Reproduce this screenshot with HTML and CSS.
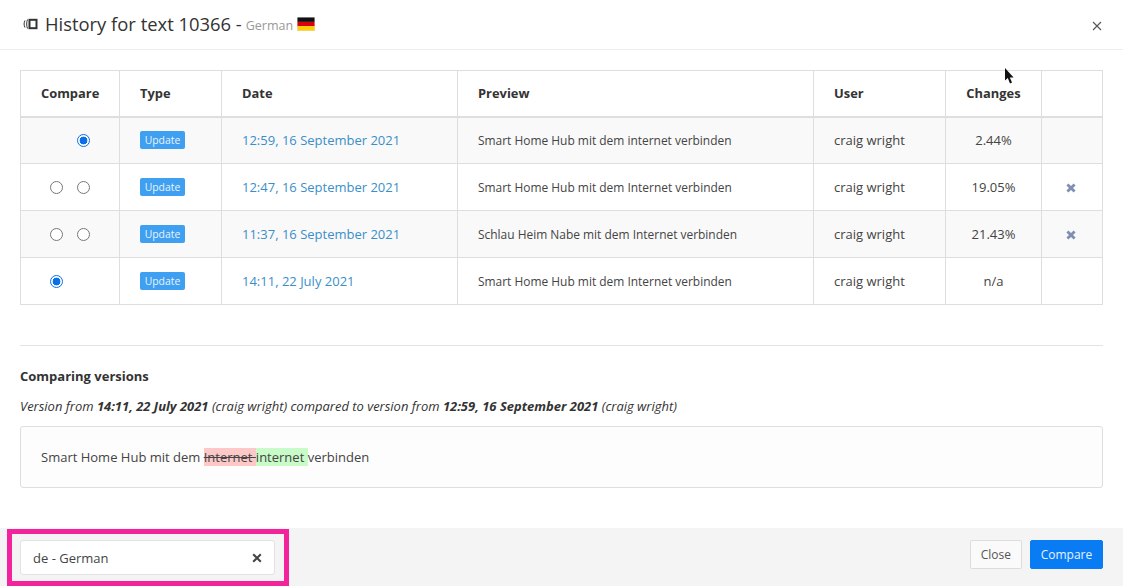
FILE: index.html
```html
<!DOCTYPE html>
<html lang="en">
<head>
<meta charset="utf-8">
<title>History for text 10366</title>
<link rel="stylesheet" href="styles.css">
</head>
<body>
<div class="modal">
  <header class="head">
    <svg class="head-icon" width="16" height="12" viewBox="0 0 16 12" fill="none" stroke="#333"><path d="M3 2.5C1.8 4.5 1.8 7.5 3 9.5" stroke-width="1"/><path d="M5.5 1.5C4.4 4.2 4.4 7.8 5.5 10.5" stroke-width="1"/><rect x="7.5" y="1.8" width="7" height="8.4" stroke-width="2"/></svg>
    <h1 class="title">History for text 10366 -</h1>
    <span class="lang">German</span>
    <svg class="flag" width="18" height="14" viewBox="0 0 18 14"><rect width="18" height="14" fill="#ddd"/><rect x="0.5" y="0.5" width="17" height="4.4" fill="#111"/><rect x="0.5" y="4.9" width="17" height="4.3" fill="#d8000c"/><rect x="0.5" y="9.2" width="17" height="4.3" fill="#ffce00"/></svg>
    <svg class="close-x" width="10" height="10" viewBox="0 0 10 10" stroke="#555" stroke-width="1.1"><path d="M1 1L9 9M9 1L1 9"/></svg>
  </header>
  <svg class="cursor" width="11" height="17" viewBox="0 0 11 17"><path d="M1 0V12.5L3.8 10L6 15.5L8 14.6L5.8 9.5H9.6Z" fill="#111"/></svg>
  <main class="body">
    <table class="history">
      <thead>
        <tr>
          <th class="c-compare">Compare</th>
          <th class="c-type">Type</th>
          <th class="c-date">Date</th>
          <th class="c-preview">Preview</th>
          <th class="c-user">User</th>
          <th class="c-changes">Changes</th>
          <th class="c-action"></th>
        </tr>
      </thead>
      <tbody>
        <tr>
          <td class="radios"><span class="radio hidden"></span><span class="radio on"></span></td>
          <td><span class="badge">Update</span></td>
          <td><a class="link" href="#">12:59, 16 September 2021</a></td>
          <td class="preview">Smart Home Hub mit dem internet verbinden</td>
          <td>craig wright</td>
          <td class="center">2.44%</td>
          <td></td>
        </tr>
        <tr>
          <td class="radios"><span class="radio"></span><span class="radio"></span></td>
          <td><span class="badge">Update</span></td>
          <td><a class="link" href="#">12:47, 16 September 2021</a></td>
          <td class="preview">Smart Home Hub mit dem Internet verbinden</td>
          <td>craig wright</td>
          <td class="center">19.05%</td>
          <td class="center"><svg class="del" width="10" height="10" viewBox="0 0 10 10" stroke="#7f8fb3" stroke-width="2.8"><path d="M1.4 1.4L8.6 8.6M8.6 1.4L1.4 8.6"/></svg></td>
        </tr>
        <tr>
          <td class="radios"><span class="radio"></span><span class="radio"></span></td>
          <td><span class="badge">Update</span></td>
          <td><a class="link" href="#">11:37, 16 September 2021</a></td>
          <td class="preview">Schlau Heim Nabe mit dem Internet verbinden</td>
          <td>craig wright</td>
          <td class="center">21.43%</td>
          <td class="center"><svg class="del" width="10" height="10" viewBox="0 0 10 10" stroke="#7f8fb3" stroke-width="2.8"><path d="M1.4 1.4L8.6 8.6M8.6 1.4L1.4 8.6"/></svg></td>
        </tr>
        <tr>
          <td class="radios"><span class="radio on"></span><span class="radio hidden"></span></td>
          <td><span class="badge">Update</span></td>
          <td><a class="link" href="#">14:11, 22 July 2021</a></td>
          <td class="preview">Smart Home Hub mit dem Internet verbinden</td>
          <td>craig wright</td>
          <td class="center">n/a</td>
          <td></td>
        </tr>
      </tbody>
    </table>
    <hr class="rule">
    <h2 class="sub">Comparing versions</h2>
    <p class="versions">Version from <b>14:11, 22 July 2021</b> (craig wright) compared to version from <b>12:59, 16 September 2021</b> (craig wright)</p>
    <div class="diff">Smart Home Hub mit dem <del>Internet </del><ins>internet </ins>verbinden</div>
  </main>
  <footer class="foot">
    <div class="highlight">
      <div class="select"><span>de - German</span><svg width="10" height="10" viewBox="0 0 10 10" stroke="#444" stroke-width="2"><path d="M1.2 1.2L8.8 8.8M8.8 1.2L1.2 8.8"/></svg></div>
    </div>
    <div class="actions">
      <button class="btn">Close</button>
      <button class="btn primary">Compare</button>
    </div>
  </footer>
</div>
</body>
</html>
```

FILE: styles.css
```css
* { box-sizing: border-box; }
html, body { margin: 0; height: 100%; background: #fff; }
body { font-family: "Open Sans", sans-serif; font-size: 14px; color: #444; overflow: hidden; }
.modal { position: relative; width: 1123px; height: 587px; display: flex; flex-direction: column; }
.head { height: 50px; padding: 0 21px 1px 22px; display: flex; align-items: center; border-bottom: 1px solid #eeeeee; }
.head-icon { margin-right: 7px; }
.title { margin: -1px 4px 0 0; font-size: 18.4px; font-weight: 400; color: #333; line-height: 24px; }
.lang { font-size: 12.5px; color: #999; margin-top: 2px; margin-right: 4px; }
.close-x { margin-left: auto; margin-top: 4px; }
.cursor { position: absolute; left: 1004px; top: 68px; }
.body { flex: 1; padding: 20px 20px 0; }
.history { width: 1083px; table-layout: fixed; border-collapse: collapse; }
.history th, .history td { border: 1px solid #dedede; padding: 0 20px; text-align: left; }
.history th { height: 46px; font-size: 12.9px; font-weight: 700; color: #333; border-bottom-width: 2px; }
.history td { height: 47px; font-size: 13px; color: #444; }
.history tbody tr:nth-child(odd) { background: #f9f9f9; }
.c-compare { width: 99px; }
.c-type { width: 102px; }
.c-date { width: 236px; }
.c-preview { width: 356px; }
.c-user { width: 132px; }
.c-changes { width: 96px; }
.history .c-changes { text-align: center; padding: 0; }
.history .center { text-align: center; padding: 0; }
.history .preview { font-size: 11.95px; }
.radios { white-space: nowrap; }
.history .radios { padding: 0 0 2px 29px; }
.radio { display: inline-block; width: 13px; height: 13px; border-radius: 50%; border: 1px solid #777; background: #fff; vertical-align: middle; margin-right: 14px; }
.radio.hidden { visibility: hidden; }
.radio.on { border: 1.5px solid #0a6fe8; background: radial-gradient(circle, #0a6fe8 0, #0a6fe8 3.6px, #fff 4.2px); }
.badge { display: inline-block; width: 45px; text-align: center; height: 18px; line-height: 18px; background: #3f9ff0; color: #e9f4fe; font-size: 10.4px; border-radius: 2px; vertical-align: middle; position: relative; top: -1px; }
.link { color: #3a8fc9; text-decoration: none; }
.del { vertical-align: middle; position: relative; left: -1px; top: -1px; }
.rule { margin: 40px 0 0; border: 0; border-top: 1px solid #e3e3e3; }
.sub { margin: 21px 0 0; font-size: 13px; line-height: 19px; font-weight: 700; color: #333; }
.versions { margin: 11px 0 0; font-size: 12.97px; line-height: 19px; font-style: italic; color: #333; }
.diff { margin-top: 10px; height: 62px; padding: 0 20px; display: flex; align-items: center; white-space: pre; background: #fdfdfd; border: 1px solid #dedede; border-radius: 3px; font-size: 13px; color: #444; }
del { background: #fcc8c8; text-decoration: line-through; }
ins { background: #c8fbc8; text-decoration: none; }
.foot { height: 58px; margin-bottom: 1px; display: flex; align-items: center; justify-content: space-between; padding: 0 20px 0 7px; background: #f4f4f4; }
.highlight { width: 282px; height: 57px; border: 5px solid #f3239b; padding: 6px 9px 6px 8px; }
.select { height: 35px; padding: 1px 12px 0 12px; display: flex; align-items: center; justify-content: space-between; background: #fff; border: 1px solid #e2e2e2; border-radius: 3px; font-size: 13px; color: #444; }
.actions { display: flex; gap: 8px; margin-bottom: 5px; }
.btn { height: 29px; padding: 0 10px; font: 12px "Open Sans", sans-serif; color: #555; background: #fafafa; border: 1px solid #ddd; border-radius: 2px; }
.btn.primary { width: 73px; padding: 0; background: #0a7cf3; border-color: #0a7cf3; color: #e6f2ff; }
```
